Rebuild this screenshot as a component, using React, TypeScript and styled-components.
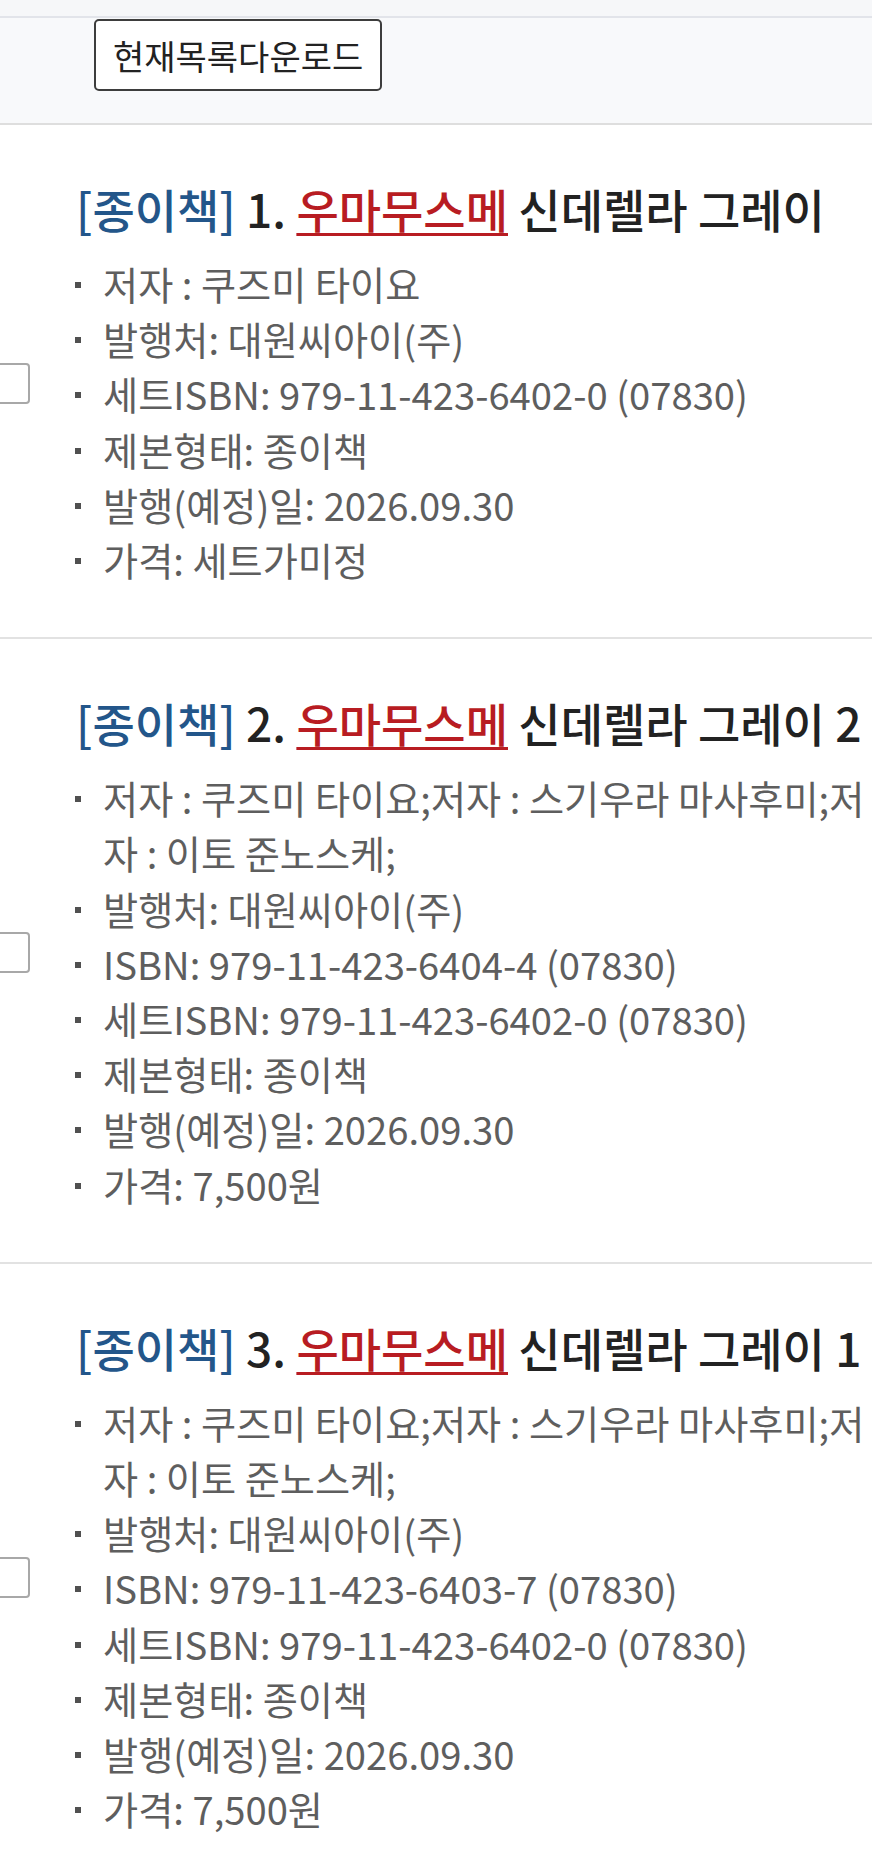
import styled, { createGlobalStyle } from "styled-components";

const GlobalStyle = createGlobalStyle`
  html, body {
    margin: 0;
    padding: 0;
    overflow-x: hidden;
    background: #ffffff;
  }
  body {
    font-family: "Noto Sans CJK KR", "Noto Sans", sans-serif;
  }
`;

type Book = {
  no: number;
  name: string;
  meta: string[];
};

const AUTHORS = "저자 : 쿠즈미 타이요;저자 : 스기우라 마사후미;저자 : 이토 준노스케;";

const books: Book[] = [
  {
    no: 1,
    name: "신데렐라 그레이",
    meta: [
      "저자 : 쿠즈미 타이요",
      "발행처: 대원씨아이(주)",
      "세트ISBN: 979-11-423-6402-0 (07830)",
      "제본형태: 종이책",
      "발행(예정)일: 2026.09.30",
      "가격: 세트가미정",
    ],
  },
  {
    no: 2,
    name: "신데렐라 그레이 2",
    meta: [
      AUTHORS,
      "발행처: 대원씨아이(주)",
      "ISBN: 979-11-423-6404-4 (07830)",
      "세트ISBN: 979-11-423-6402-0 (07830)",
      "제본형태: 종이책",
      "발행(예정)일: 2026.09.30",
      "가격: 7,500원",
    ],
  },
  {
    no: 3,
    name: "신데렐라 그레이 1",
    meta: [
      AUTHORS,
      "발행처: 대원씨아이(주)",
      "ISBN: 979-11-423-6403-7 (07830)",
      "세트ISBN: 979-11-423-6402-0 (07830)",
      "제본형태: 종이책",
      "발행(예정)일: 2026.09.30",
      "가격: 7,500원",
    ],
  },
];

const Page = styled.div`
  width: 960px;
  background: #ffffff;
`;

const TopEdge = styled.div`
  height: 16px;
  background: #f6f7f9;
  border-bottom: 2px solid #e2e4ea;
`;

const Toolbar = styled.div`
  display: flex;
  align-items: flex-start;
  padding: 1px 0 32px 94px;
  background: #f8f9fb;
  border-bottom: 2px solid #dedede;
`;

const DownloadButton = styled.button`
  height: 72px;
  padding: 0 17px;
  background: #ffffff;
  border: 2px solid #3d3d3d;
  border-radius: 5px;
  font-family: "Noto Sans CJK KR", sans-serif;
  font-size: 34px;
  color: #222222;
  cursor: pointer;
`;

const List = styled.div`
  display: flex;
  flex-direction: column;
`;

const Row = styled.div`
  display: flex;
  align-items: center;
  margin-left: -11px;
  padding: 54px 0 50px;
  border-bottom: 2px solid #e2e2e2;
`;

const CheckBox = styled.span`
  flex: none;
  width: 41px;
  height: 41px;
  box-sizing: border-box;
  border: 2px solid #a8a8a8;
  border-radius: 4px;
  background: #ffffff;
`;

const Body = styled.div`
  width: 815px;
  margin-left: 46px;
`;

const Title = styled.div`
  font-size: 46px;
  font-weight: 500;
  line-height: 59px;
  color: #222222;
  white-space: nowrap;
  margin-bottom: 18px;
`;

const Kind = styled.span`
  color: #23568a;
`;

const Series = styled.span`
  color: #b81c22;
  text-decoration: underline;
  text-decoration-color: #b81c22;
  text-decoration-thickness: 3px;
  text-underline-offset: 5px;
`;

const MetaList = styled.ul`
  list-style: none;
  margin: 0;
  padding: 0;
`;

const MetaItem = styled.li`
  position: relative;
  padding-left: 27px;
  font-size: 38.2px;
  line-height: 55.2px;
  color: #5e5e5e;
  word-break: break-all;

  &::before {
    content: "";
    position: absolute;
    left: -1px;
    top: 26px;
    width: 6px;
    height: 6px;
    background: #505050;
  }
`;

export default function App() {
  return (
    <Page>
      <GlobalStyle />
      <TopEdge />
      <Toolbar>
        <DownloadButton type="button">현재목록다운로드</DownloadButton>
      </Toolbar>
      <List>
        {books.map((b) => (
          <Row key={b.no}>
            <CheckBox />
            <Body>
              <Title>
                <Kind>[종이책]</Kind> {b.no}. <Series>우마무스메</Series> {b.name}
              </Title>
              <MetaList>
                {b.meta.map((m, i) => (
                  <MetaItem key={i}>{m}</MetaItem>
                ))}
              </MetaList>
            </Body>
          </Row>
        ))}
      </List>
    </Page>
  );
}
